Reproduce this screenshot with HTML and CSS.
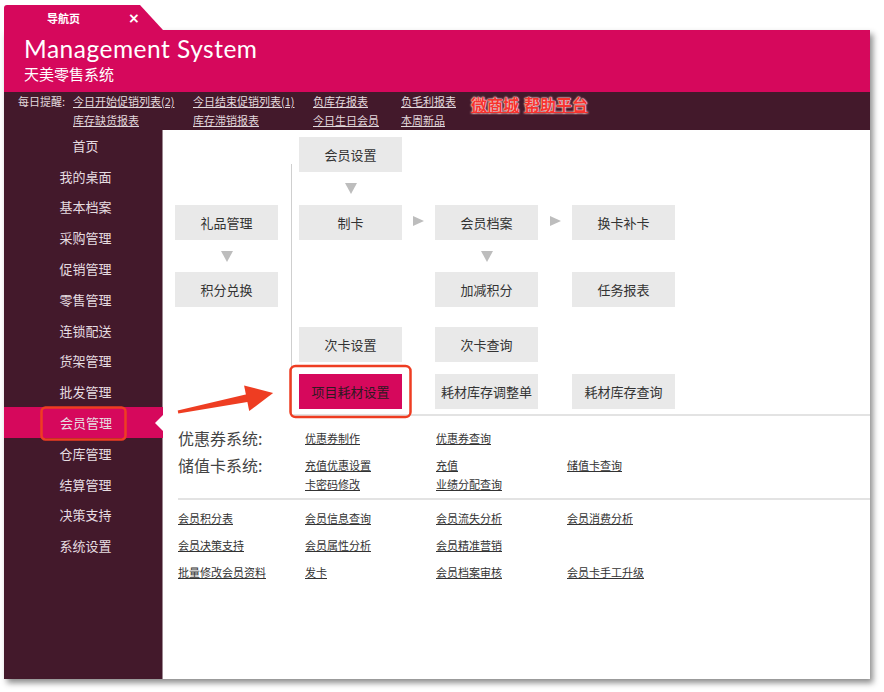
FILE: index.html
```html
<!DOCTYPE html>
<html lang="zh-CN">
<head>
<meta charset="utf-8">
<title>导航页 - Management System</title>
<link rel="stylesheet" href="styles.css">
</head>
<body>
<div class="app">
  <div class="tabs">
    <div class="tab"><span class="tab-title">导航页</span><span class="tab-close">×</span></div>
  </div>

  <div class="frame">
    <header class="brand">
      <h1>Management System</h1>
      <p>天美零售系统</p>
    </header>

    <div class="remind">
      <span class="remind-label">每日提醒:</span>
      <div class="remind-grid">
        <a href="#">今日开始促销列表(2)</a>
        <a href="#">今日结束促销列表(1)</a>
        <a href="#">负库存报表</a>
        <a href="#">负毛利报表</a>
        <a href="#">库存缺货报表</a>
        <a href="#">库存滞销报表</a>
        <a href="#">今日生日会员</a>
        <a href="#">本周新品</a>
      </div>
      <div class="remind-hot">
        <a href="#">微商城</a>
        <a href="#">帮助平台</a>
      </div>
    </div>

    <div class="body">
      <nav class="side">
        <a class="side-item" href="#">首页</a>
        <a class="side-item" href="#">我的桌面</a>
        <a class="side-item" href="#">基本档案</a>
        <a class="side-item" href="#">采购管理</a>
        <a class="side-item" href="#">促销管理</a>
        <a class="side-item" href="#">零售管理</a>
        <a class="side-item" href="#">连锁配送</a>
        <a class="side-item" href="#">货架管理</a>
        <a class="side-item" href="#">批发管理</a>
        <a class="side-item active" href="#">会员管理</a>
        <a class="side-item" href="#">仓库管理</a>
        <a class="side-item" href="#">结算管理</a>
        <a class="side-item" href="#">决策支持</a>
        <a class="side-item" href="#">系统设置</a>
      </nav>

      <main class="content">
        <div class="flow">
          <span class="rule-v"></span>

          <a class="node c3 r1" href="#">会员设置</a>
          <span class="down c3 r2"></span>

          <a class="node c1 r3" href="#">礼品管理</a>
          <a class="node c3 r3" href="#">制卡</a>
          <span class="right c4 r3"></span>
          <a class="node c5 r3" href="#">会员档案</a>
          <span class="right c6 r3"></span>
          <a class="node c7 r3" href="#">换卡补卡</a>

          <span class="down c1 r4"></span>
          <span class="down c5 r4"></span>

          <a class="node c1 r5" href="#">积分兑换</a>
          <a class="node c5 r5" href="#">加减积分</a>
          <a class="node c7 r5" href="#">任务报表</a>

          <a class="node c3 r7" href="#">次卡设置</a>
          <a class="node c5 r7" href="#">次卡查询</a>

          <a class="node hot c3 r9" href="#">项目耗材设置</a>
          <a class="node c5 r9" href="#">耗材库存调整单</a>
          <a class="node c7 r9" href="#">耗材库存查询</a>
        </div>

        <div class="rule-h"></div>

        <div class="systems">
          <div class="sys">
            <span class="sys-name">优惠券系统:</span>
            <div class="sys-links">
              <a href="#">优惠券制作</a>
              <a href="#">优惠券查询</a>
            </div>
          </div>
          <div class="sys">
            <span class="sys-name">储值卡系统:</span>
            <div class="sys-links">
              <a href="#">充值优惠设置</a>
              <a href="#">充值</a>
              <a href="#">储值卡查询</a>
              <a href="#">卡密码修改</a>
              <a href="#">业绩分配查询</a>
            </div>
          </div>
        </div>

        <div class="rule-h wide"></div>

        <div class="reports">
          <a href="#">会员积分表</a>
          <a href="#">会员信息查询</a>
          <a href="#">会员流失分析</a>
          <a href="#">会员消费分析</a>
          <a href="#">会员决策支持</a>
          <a href="#">会员属性分析</a>
          <a href="#">会员精准营销</a>
          <span></span>
          <a href="#">批量修改会员资料</a>
          <a href="#">发卡</a>
          <a href="#">会员档案审核</a>
          <a href="#">会员卡手工升级</a>
        </div>
      </main>
    </div>
  </div>

  <!-- callout marks drawn over the menu and the highlighted node -->
  <svg class="marks" width="884" height="692" viewBox="0 0 884 692" aria-hidden="true">
    <rect x="41.5" y="407.5" width="84" height="32" rx="4" fill="none" stroke="#ee3d22" stroke-width="2.5"/>
    <rect x="290.5" y="366" width="120" height="51" rx="5" fill="none" stroke="#ee3d22" stroke-width="2.5"/>
    <g transform="translate(178 412) rotate(-11.3)" fill="#ee3d22">
      <polygon points="0,-1.5 73,-4 73,4 0,1.5"/>
      <polygon points="70,-13 97,0 70,13"/>
    </g>
  </svg>
</div>
</body>
</html>
```

FILE: styles.css
```css
* {
  box-sizing: border-box;
}

html,
body {
  margin: 0;
  background: #fff;
}

body {
  font-family: "Noto Sans CJK SC", "Microsoft YaHei", sans-serif;
  color: #333;
}

a {
  color: inherit;
}

.app {
  position: relative;
  width: 884px;
  height: 692px;
  padding: 5px 0 0 4px;
}

/* ---- tab strip ---- */
.tabs {
  height: 25px;
  width: 866px;
}

.tab {
  width: 159px;
  height: 25px;
  background: #d6085c;
  clip-path: polygon(0 0, 136px 0, 159px 100%, 0 100%);
  border-top-left-radius: 3px;
  display: flex;
  align-items: center;
  color: #fff;
  font-size: 11px;
  font-weight: bold;
}

.tab-title {
  margin-left: 43px;
}

.tab-close {
  margin-left: 48px;
  font-size: 14px;
  font-family: "DejaVu Sans", sans-serif;
}

/* ---- window frame ---- */
.frame {
  width: 866px;
  height: 649px;
  display: flex;
  flex-direction: column;
  box-shadow: 3px 4px 6px rgba(0, 0, 0, 0.45);
}

.brand {
  height: 62px;
  flex: none;
  background: #d6085c;
  color: #fff;
  padding: 4px 0 0 20px;
}

.brand h1 {
  margin: 0;
  font: 400 24.5px/30px "Lato", sans-serif;
  letter-spacing: 0.5px;
}

.brand p {
  margin: 0;
  font-size: 15px;
  line-height: 20px;
}

/* ---- daily reminder bar ---- */
.remind {
  height: 38px;
  flex: none;
  background: #43192b;
  display: flex;
  padding: 1px 0 0 14px;
  color: #e2d8dc;
  font-size: 11px;
  line-height: 17px;
}

.remind-label {
  width: 55px;
}

.remind-grid {
  display: grid;
  grid-template-columns: 120px 120px 88px 70px;
}

.remind-grid a {
  justify-self: start;
}

.remind-hot {
  display: flex;
  gap: 5px;
  align-items: flex-start;
  font-size: 16px;
  font-weight: bold;
  line-height: 20px;
  padding-top: 1px;
}

.remind-hot a {
  color: #f5332f;
  text-shadow: 0 0 1px #fff, 0 0 2px #ffc4c4, 0 0 2px #ffc4c4;
}

/* ---- body: menu + content ---- */
.body {
  flex: 1;
  display: flex;
  min-height: 0;
}

.side {
  width: 159px;
  flex: none;
  background: #43192b;
  border-right: 1px solid #9b8790;
}

.side-item {
  height: 30.8px;
  display: flex;
  align-items: center;
  justify-content: center;
  position: relative;
  padding-left: 5px;
  font-size: 13px;
  color: #e6dde1;
  text-decoration: none;
}

.side-item.active {
  background: #d6085c;
  margin-right: -1px;
}

.side-item.active::after {
  content: "";
  position: absolute;
  right: 0;
  top: 50%;
  margin-top: -8px;
  border-style: solid;
  border-width: 8px 8px 8px 0;
  border-color: transparent #fff transparent transparent;
}

.content {
  flex: 1;
  background: #fff;
}

/* ---- flow chart ---- */
.flow {
  display: grid;
  grid-template-columns: 103px 21px 103px 33px 103px 34px 103px;
  grid-template-rows: 35px 33px 35px 32px 35px 20px 35px 12px 35px;
  padding: 7px 0 0 12px;
}

.c1 { grid-column: 1; }
.c3 { grid-column: 3; }
.c4 { grid-column: 4; }
.c5 { grid-column: 5; }
.c6 { grid-column: 6; }
.c7 { grid-column: 7; }
.r1 { grid-row: 1; }
.r2 { grid-row: 2; }
.r3 { grid-row: 3; }
.r4 { grid-row: 4; }
.r5 { grid-row: 5; }
.r7 { grid-row: 7; }
.r9 { grid-row: 9; }

.node {
  background: #e9e9e9;
  display: flex;
  align-items: center;
  justify-content: center;
  font-size: 13px;
  color: #333;
  text-decoration: none;
}

.node.hot {
  background: #d6085c;
  color: #2e1a22;
}

.down {
  justify-self: center;
  align-self: center;
  width: 0;
  height: 0;
  border-style: solid;
  border-width: 11px 6px 0 6px;
  border-color: #bdbdbd transparent transparent transparent;
}

.right {
  justify-self: center;
  align-self: center;
  width: 0;
  height: 0;
  margin-top: -3px;
  border-style: solid;
  border-width: 5px 0 5px 11px;
  border-color: transparent transparent transparent #bdbdbd;
}

.rule-v {
  grid-column: 2;
  grid-row: 1 / 10;
  width: 1px;
  margin: 27px 0 -5px 13px;
  background: #cfcfcf;
}

.rule-h {
  height: 2px;
  background: #e3e3e3;
  margin: 5px 0 0 129px;
}

.rule-h.wide {
  margin: 4px 0 0 15px;
}

/* ---- coupon / stored-value systems ---- */
.systems {
  display: flex;
  flex-direction: column;
  gap: 8px;
  padding: 13px 0 0 15px;
}

.sys {
  display: flex;
  line-height: 19px;
}

.sys-name {
  width: 127px;
  flex: none;
  font-size: 16px;
  color: #444;
}

.sys-links {
  display: grid;
  grid-template-columns: repeat(3, 131px);
  font-size: 11px;
}

.sys-links a,
.reports a {
  justify-self: start;
  color: #333;
}

/* ---- member reports ---- */
.reports {
  display: grid;
  grid-template-columns: 127px 131px 131px 131px;
  row-gap: 8px;
  line-height: 19px;
  font-size: 11px;
  padding: 9px 0 0 15px;
}

/* ---- overlay marks ---- */
.marks {
  position: absolute;
  left: 0;
  top: 0;
  pointer-events: none;
}
```
